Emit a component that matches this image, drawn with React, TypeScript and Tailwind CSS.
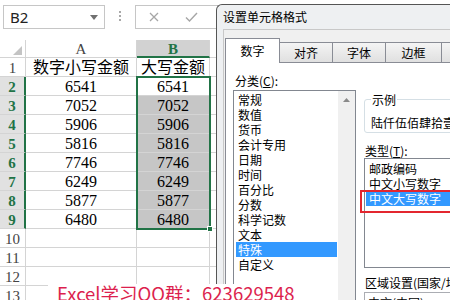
import clsx from 'clsx';

const rows = [
  ['数字小写金额', '大写金额'],
  ['6541', '6541'],
  ['7052', '7052'],
  ['5906', '5906'],
  ['5816', '5816'],
  ['7746', '7746'],
  ['6249', '6249'],
  ['5877', '5877'],
  ['6480', '6480'],
  ['', ''],
  ['', ''],
  ['', ''],
  ['', ''],
];

const categories = ['常规', '数值', '货币', '会计专用', '日期', '时间', '百分比', '分数', '科学记数', '文本', '特殊', '自定义'];
const types = ['邮政编码', '中文小写数字', '中文大写数字'];
const tabs = [
  { label: '数字', w: 'w-[55px]' },
  { label: '对齐', w: 'w-[53px]' },
  { label: '字体', w: 'w-[53px]' },
  { label: '边框', w: 'w-[56px]' },
  { label: '填充', w: 'w-[56px]' },
];

function FormulaBar() {
  return (
    <div className="flex h-[40px] items-start pl-[3px] pt-[5px]">
      {/* Name box */}
      <div className="flex h-[24px] w-[102px] items-center justify-between border border-[#c6c6c6] bg-white pl-[6px] pr-[6px]">
        <span className="text-[15px] leading-none text-[#222]">B2</span>
        <svg width="8" height="5" viewBox="0 0 8 5">
          <path d="M0 0h8L4 5z" fill="#707070" />
        </svg>
      </div>
      {/* grip dots */}
      <div className="flex w-[30px] flex-col items-center gap-[2px] pt-[6px]">
        <span className="h-[2px] w-[2px] bg-[#a8a8a8]" />
        <span className="h-[2px] w-[2px] bg-[#a8a8a8]" />
        <span className="h-[2px] w-[2px] bg-[#a8a8a8]" />
      </div>
      {/* cancel / enter */}
      <div className="flex h-[24px] w-[120px] items-center border border-[#c6c6c6] bg-white pl-[13px]">
        <svg width="10" height="10" viewBox="0 0 10 10">
          <path d="M1 1l8 8M9 1l-8 8" stroke="#a6a6a6" strokeWidth="1.3" fill="none" />
        </svg>
        <svg className="ml-[26px]" width="13" height="10" viewBox="0 0 13 10">
          <path d="M1 5.5l3.5 3.5L12 1" stroke="#a6a6a6" strokeWidth="1.4" fill="none" />
        </svg>
      </div>
    </div>
  );
}

function Sheet() {
  return (
    <div className="font-['Liberation_Serif','Noto_Sans_CJK_SC',serif] text-[16px] text-black">
      {/* column headers */}
      <div className="flex h-[18px]">
        <div className="relative w-[26px] border-r border-b border-[#d4d4d4]">
          <svg className="absolute right-[3px] bottom-[2px]" width="9" height="9" viewBox="0 0 9 9">
            <path d="M9 0v9H0z" fill="#c4c4c4" />
          </svg>
        </div>
        <div className="w-[111px] border-r border-b border-[#d4d4d4] text-center text-[15px] leading-[19px] text-[#444]">A</div>
        <div className="w-[73px] border-r border-b-2 border-[#d4d4d4] border-b-[#217346] bg-[#d2d2d2] text-center text-[15px] font-bold leading-[18px] text-[#217346]">B</div>
        <div className="flex-1 border-b border-[#d4d4d4]" />
      </div>
      {/* rows */}
      <div className="relative">
        {rows.map((r, i) => {
          const n = i + 1;
          const sel = n >= 2 && n <= 9;
          return (
            <div key={n} className="flex h-[19px]">
              <div
                className={clsx(
                  'w-[26px] border-b border-[#d4d4d4] text-center text-[15px] leading-[20px]',
                  sel ? 'border-r-2 border-r-[#217346] bg-[#e1e1e1] font-bold text-[#217346]' : 'border-r text-[#444]'
                )}
              >
                {n}
              </div>
              <div className="w-[111px] border-r border-b border-[#d4d4d4] text-center leading-[20px]">{r[0]}</div>
              <div
                className={clsx(
                  'w-[73px] border-r border-b border-[#d4d4d4] text-center leading-[20px]',
                  n >= 3 && n <= 9 && 'bg-[#c6c6c6]'
                )}
              >
                {r[1]}
              </div>
              <div className="flex-1 border-b border-[#d4d4d4]" />
            </div>
          );
        })}
        {/* selection B2:B9 */}
        <div className="absolute left-[136px] top-[18px] h-[154px] w-[75px] border-2 border-[#217346]">
          <div className="absolute right-[-4px] bottom-[-4px] h-[6px] w-[6px] border border-white bg-[#217346]" />
        </div>
      </div>
    </div>
  );
}

function Dialog() {
  return (
    <div className="absolute left-[216px] top-[4px] h-[320px] w-[290px] rounded-tl-[6px] border-t border-l border-[#555] bg-[#eef0f2] font-['Noto_Sans_CJK_SC',sans-serif] text-[12px] text-black">
      <div className="h-[24px] pl-[6px] leading-[24px]">设置单元格格式</div>
      <div className="ml-[6px] h-full border-t border-l border-[#c8c8c8] bg-[#f0f0f0] pt-[8px] pl-[1px]">
        {/* tabs */}
        <div className="relative z-10 -mb-px flex h-[25px] items-end">
          {tabs.map((t, i) =>
            i === 0 ? (
              <div key={t.label} className={clsx(t.w, 'h-[25px] shrink-0 border-x border-t border-[#898c95] bg-white text-center leading-[24px]')}>
                {t.label}
              </div>
            ) : (
              <div
                key={t.label}
                className={clsx(
                  t.w,
                  'h-[21px] shrink-0 border-t border-r border-b border-[#898c95] bg-linear-to-b from-[#f4f4f4] to-[#e0e0e0] text-center leading-[20px]'
                )}
              >
                {t.label}
              </div>
            )
          )}
        </div>
        {/* tab page */}
        <div className="flex h-full gap-[8px] border-t border-l border-[#898c95] bg-white px-[7px]">
          {/* category */}
          <div className="w-[123px] shrink-0 pt-[10px]">
            <div className="h-[15px] pl-[2px] leading-[15px]">
              分类(<span className="underline">C</span>):
            </div>
            <div className="mt-[2px] flex h-[220px] border border-[#828790]">
              <div className="flex-1 pt-[1px]">
                {categories.map((c) => (
                  <div
                    key={c}
                    className={clsx(
                      'ml-[2px] mr-[1px] h-[15px] pl-[2px] leading-[15px]',
                      c === '特殊' && 'bg-[#3399ff] text-white'
                    )}
                  >
                    {c}
                  </div>
                ))}
              </div>
              <div className="w-[17px] bg-[#f0f0f0]">
                <div className="flex h-[17px] items-center justify-center">
                  <svg width="7" height="4" viewBox="0 0 7 4">
                    <path d="M3.5 0L7 4H0z" fill="#8a8a8a" />
                  </svg>
                </div>
              </div>
            </div>
          </div>
          {/* right column */}
          <div className="min-w-0 flex-1">
            <div className="relative mt-[36px] h-[34px] rounded-[3px] border border-[#d5dfe5] pt-[14px] pl-[6px] whitespace-nowrap">
              <span className="absolute -top-[8px] left-[6px] bg-white px-[1px] leading-[15px]">示例</span>
              <span className="leading-[15px]">陆仟伍佰肆拾壹</span>
            </div>
            <div className="mt-[10px] h-[15px] pl-[1px] leading-[15px]">
              类型(<span className="underline">T</span>):
            </div>
            <div className="relative h-[110px] border border-[#828790] pt-[2px] whitespace-nowrap">
              {types.map((t) => (
                <div
                  key={t}
                  className={clsx('ml-[1px] h-[15px] pl-[3px] leading-[15px]', t === '中文大写数字' && 'bg-[#3399ff] text-white')}
                >
                  {t}
                </div>
              ))}
              <div className="absolute top-[31px] -left-[5px] h-[23px] w-[130px] border-2 border-[#e3262f]" />
            </div>
            <div className="mt-[7px] h-[15px] pl-[1px] leading-[15px] whitespace-nowrap">区域设置(国家/地区):</div>
            <div className="mt-[2px] h-[22px] border border-[#abadb3] pl-[3px] leading-[20px] whitespace-nowrap">中文(中国)</div>
          </div>
        </div>
      </div>
    </div>
  );
}

export default function App() {
  return (
    <div className="relative h-[300px] w-[450px] overflow-hidden bg-white">
      <FormulaBar />
      <Sheet />
      <Dialog />
      {/* watermark */}
      <div className="absolute left-[48px] top-[284px] h-[20px] w-[252px] bg-white pl-[9px] font-['Noto_Sans_CJK_SC',sans-serif] text-[18.5px] leading-none whitespace-nowrap text-[#dc1f4e]">
        Excel学习QQ群：623629548
      </div>
    </div>
  );
}
